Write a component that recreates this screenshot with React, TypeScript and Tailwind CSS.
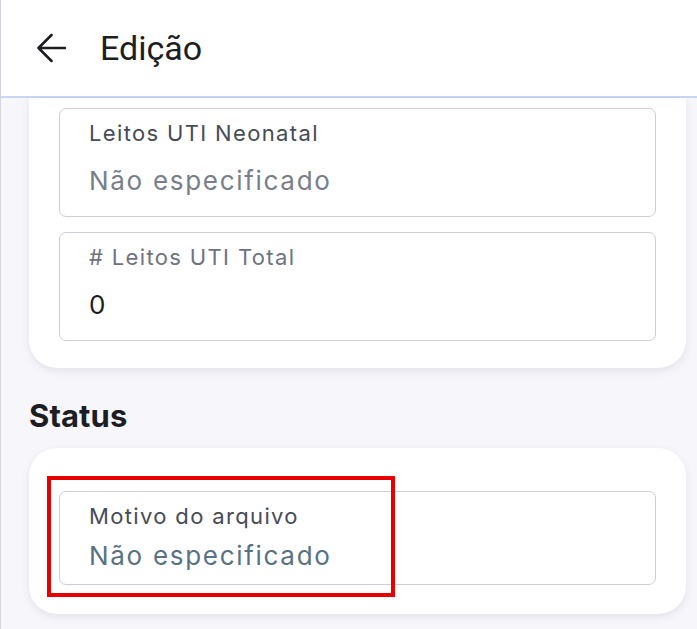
import React from 'react';

// Read-only field shown as an outlined box
interface FieldProps {
  label: string;
  value: string;
  labelTone?: 'dark' | 'light';
  valueTone?: 'placeholder' | 'filled' | 'slate';
  compact?: boolean;
}

const Field: React.FC<FieldProps> = ({
  label,
  value,
  labelTone = 'dark',
  valueTone = 'placeholder',
  compact = false,
}) => {
  const labelColor = labelTone === 'dark' ? 'text-[#464b56]' : 'text-[#6d7380]';
  const valueColor =
    valueTone === 'filled'
      ? 'text-[#1b1b1f]'
      : valueTone === 'slate'
        ? 'text-[#587284]'
        : 'text-[#787e8b]';

  return (
    <div
      className={`rounded-[7px] border-[1.5px] border-[#cbcddb] bg-white px-[29px] ${
        compact ? 'pt-[10px] pb-[12px]' : 'pt-[10px] pb-[19px]'
      }`}
    >
      <p className={`text-[22px] leading-[28px] tracking-[1.35px] ${labelColor}`}>{label}</p>
      <p
        className={`text-[26px] leading-[32px] tracking-[1.7px] ${valueColor} ${
          compact ? 'mt-[10px]' : 'mt-[18px]'
        }`}
      >
        {value}
      </p>
    </div>
  );
};

export default function App() {
  return (
    <div
      className="w-[697px] h-[629px] overflow-hidden bg-[#f7f6fb] border-l border-[#d4d4da] flex flex-col"
      style={{ fontFamily: 'Inter, "Noto Sans", sans-serif' }}
    >
      {/* Header */}
      <header className="h-[98px] shrink-0 bg-white border-b-2 border-[#c7d7f4] flex items-center pl-[35px]">
        <svg width="30" height="30" viewBox="0 0 30 30" fill="none" className="mr-[34px] -mt-[1px]">
          <path
            d="M29 15H2.5M15.5 2L2.5 15L15.5 28"
            stroke="#1d1d22"
            strokeWidth="2.6"
            strokeLinecap="round"
            strokeLinejoin="round"
          />
        </svg>
        <h1
          className="text-[34px] text-[#1d1d22]"
          style={{ fontFamily: 'Roboto, "Noto Sans", sans-serif' }}
        >
          Edição
        </h1>
      </header>

      {/* Scrolled content */}
      <div className="flex-1 px-[28px] pr-[11px]">
        <div className="bg-white rounded-b-[28px] px-[30px] pt-[10px] pb-[27px] shadow-[0_3px_8px_rgba(60,60,100,0.10)] flex flex-col gap-[15px]">
          <Field label="Leitos UTI Neonatal" value="Não especificado" />
          <Field
            label="# Leitos UTI Total"
            value="0"
            labelTone="light"
            valueTone="filled"
          />
        </div>

        <h2 className="mt-[32px] text-[31px] leading-[32px] font-bold text-[#1d1e24] tracking-[0.1px]">
          Status
        </h2>

        <div className="relative mt-[16px] bg-white rounded-[28px] px-[30px] pt-[43px] pb-[29px] shadow-[0_3px_8px_rgba(60,60,100,0.10)]">
          <Field
            label="Motivo do arquivo"
            value="Não especificado"
            valueTone="slate"
            compact
          />
          <div className="absolute left-[18px] top-[28px] w-[348px] h-[121px] border-4 border-[#e60000] pointer-events-none" />
        </div>
      </div>
    </div>
  );
}
